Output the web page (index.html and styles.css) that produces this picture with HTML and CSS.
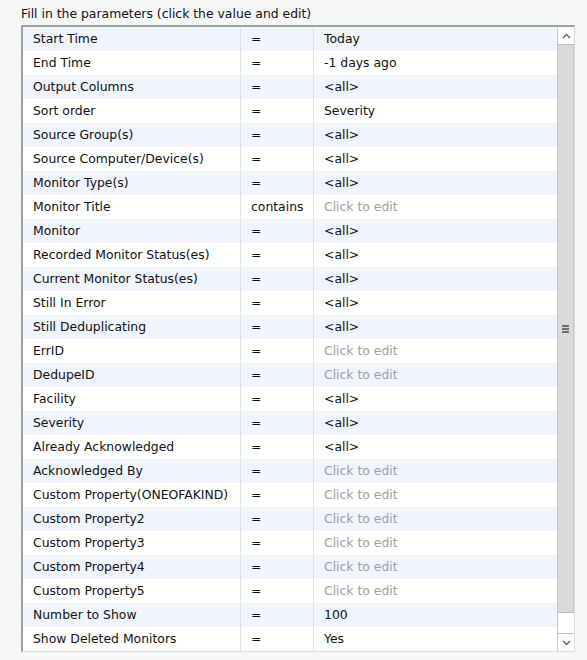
FILE: index.html
```html
<!DOCTYPE html>
<html>
<head>
<meta charset="utf-8">
<link rel="stylesheet" href="styles.css">
</head>
<body>
<div class="title">Fill in the parameters (click the value and edit)</div>
<div class="box">
  <div class="grid">
    <div class="row"><div class="c1">Start Time</div><div class="c2">=</div><div class="c3">Today</div></div>
    <div class="row"><div class="c1">End Time</div><div class="c2">=</div><div class="c3">-1 days ago</div></div>
    <div class="row"><div class="c1">Output Columns</div><div class="c2">=</div><div class="c3">&lt;all&gt;</div></div>
    <div class="row"><div class="c1">Sort order</div><div class="c2">=</div><div class="c3">Severity</div></div>
    <div class="row"><div class="c1">Source Group(s)</div><div class="c2">=</div><div class="c3">&lt;all&gt;</div></div>
    <div class="row"><div class="c1">Source Computer/Device(s)</div><div class="c2">=</div><div class="c3">&lt;all&gt;</div></div>
    <div class="row"><div class="c1">Monitor Type(s)</div><div class="c2">=</div><div class="c3">&lt;all&gt;</div></div>
    <div class="row"><div class="c1">Monitor Title</div><div class="c2">contains</div><div class="c3 ph">Click to edit</div></div>
    <div class="row"><div class="c1">Monitor</div><div class="c2">=</div><div class="c3">&lt;all&gt;</div></div>
    <div class="row"><div class="c1">Recorded Monitor Status(es)</div><div class="c2">=</div><div class="c3">&lt;all&gt;</div></div>
    <div class="row"><div class="c1">Current Monitor Status(es)</div><div class="c2">=</div><div class="c3">&lt;all&gt;</div></div>
    <div class="row"><div class="c1">Still In Error</div><div class="c2">=</div><div class="c3">&lt;all&gt;</div></div>
    <div class="row"><div class="c1">Still Deduplicating</div><div class="c2">=</div><div class="c3">&lt;all&gt;</div></div>
    <div class="row"><div class="c1">ErrID</div><div class="c2">=</div><div class="c3 ph">Click to edit</div></div>
    <div class="row"><div class="c1">DedupeID</div><div class="c2">=</div><div class="c3 ph">Click to edit</div></div>
    <div class="row"><div class="c1">Facility</div><div class="c2">=</div><div class="c3">&lt;all&gt;</div></div>
    <div class="row"><div class="c1">Severity</div><div class="c2">=</div><div class="c3">&lt;all&gt;</div></div>
    <div class="row"><div class="c1">Already Acknowledged</div><div class="c2">=</div><div class="c3">&lt;all&gt;</div></div>
    <div class="row"><div class="c1">Acknowledged By</div><div class="c2">=</div><div class="c3 ph">Click to edit</div></div>
    <div class="row"><div class="c1">Custom Property(ONEOFAKIND)</div><div class="c2">=</div><div class="c3 ph">Click to edit</div></div>
    <div class="row"><div class="c1">Custom Property2</div><div class="c2">=</div><div class="c3 ph">Click to edit</div></div>
    <div class="row"><div class="c1">Custom Property3</div><div class="c2">=</div><div class="c3 ph">Click to edit</div></div>
    <div class="row"><div class="c1">Custom Property4</div><div class="c2">=</div><div class="c3 ph">Click to edit</div></div>
    <div class="row"><div class="c1">Custom Property5</div><div class="c2">=</div><div class="c3 ph">Click to edit</div></div>
    <div class="row"><div class="c1">Number to Show</div><div class="c2">=</div><div class="c3">100</div></div>
    <div class="row"><div class="c1">Show Deleted Monitors</div><div class="c2">=</div><div class="c3">Yes</div></div>
  </div>
  <div class="scrollbar">
    <div class="arrow up"><svg width="9" height="6" viewBox="0 0 9 6"><path d="M1 5 L4.5 1.5 L8 5" fill="none" stroke="#606060" stroke-width="1.3"/></svg></div>
    <div class="thumb"><div class="grip"><span></span><span></span><span></span></div></div>
    <div class="track"></div>
    <div class="arrow down"><svg width="9" height="6" viewBox="0 0 9 6"><path d="M1 1 L4.5 4.5 L8 1" fill="none" stroke="#606060" stroke-width="1.3"/></svg></div>
  </div>
</div>
</body>
</html>
```
FILE: styles.css
```css
html, body {
  margin: 0;
  padding: 0;
  background: #f7f7f7;
}
body {
  font-family: "DejaVu Sans", Verdana, sans-serif;
  font-size: 12.4px;
  color: #111;
}
.title {
  padding: 6px 0 0 21px;
  height: 19px;
  line-height: 15px;
}
.box {
  margin-left: 21px;
  width: 551px;
  display: flex;
  border-top: 2px solid #a0a0a0;
  border-left: 2px solid #a0a0a0;
  border-right: 1px solid #dcdcdc;
  border-bottom: 1px solid #dcdcdc;
  background: #fff;
}
.grid {
  width: 534px;
  display: flex;
  flex-direction: column;
}
.row {
  display: flex;
  height: 24px;
  line-height: 24px;
  background: #fff;
}
.row:nth-child(odd) {
  background: #eff4fd;
}
.c1, .c2, .c3 {
  padding-left: 10px;
  white-space: nowrap;
  overflow: hidden;
  box-sizing: border-box;
}
.c1 {
  width: 218px;
  border-right: 1px solid #dde3ec;
}
.c2 {
  width: 73px;
  border-right: 1px solid #dde3ec;
}
.c3 {
  flex: 1;
}
.ph {
  color: #a0a0a0;
}
.scrollbar {
  width: 17px;
  display: flex;
  flex-direction: column;
  background: #fff;
  border-left: 1px solid #c8c8c8;
  box-sizing: border-box;
}
.arrow {
  height: 17px;
  display: flex;
  align-items: center;
  justify-content: center;
  background: #fff;
}
.up {
  border-bottom: 1px solid #c0c0c0;
}
.down {
  border-top: 1px solid #c0c0c0;
}
.thumb {
  height: 567px;
  background: #dadada;
  border-bottom: 1px solid #bdbdbd;
  border-right: 1px solid #c8c8c8;
  display: flex;
  align-items: center;
  justify-content: center;
}
.grip {
  display: flex;
  flex-direction: column;
  gap: 1px;
}
.grip span {
  display: block;
  width: 7px;
  height: 2px;
  background: #6e6e6e;
}
.track {
  flex: 1;
}
```
